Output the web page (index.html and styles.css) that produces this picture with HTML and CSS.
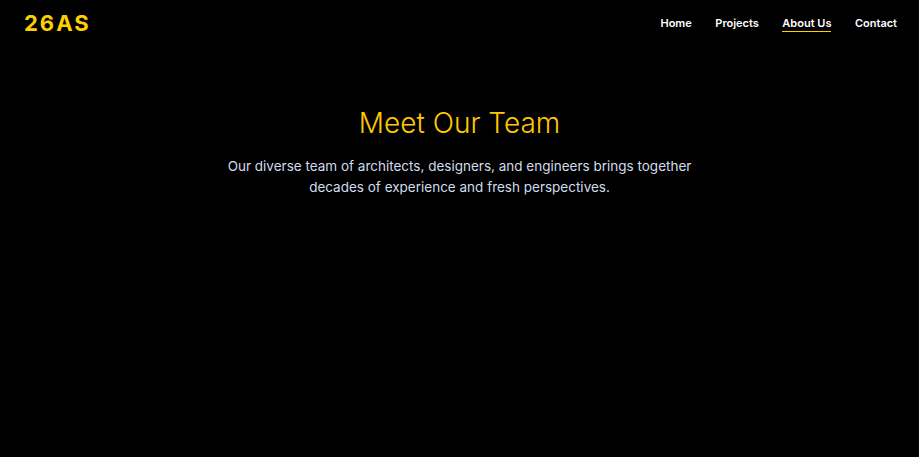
FILE: index.html
```html
<!DOCTYPE html>
<html lang="en">
<head>
<meta charset="utf-8">
<title>26AS - About Us</title>
<link rel="stylesheet" href="styles.css">
</head>
<body>
<header class="site-header">
  <div class="logo">26AS</div>
  <nav class="nav">
    <a href="#" class="nav-link">Home</a>
    <a href="#" class="nav-link">Projects</a>
    <a href="#" class="nav-link active">About Us</a>
    <a href="#" class="nav-link">Contact</a>
  </nav>
</header>
<main class="team">
  <h1 class="team-title">Meet Our Team</h1>
  <p class="team-text">Our diverse team of architects, designers, and engineers brings together decades of experience and fresh perspectives.</p>
</main>
</body>
</html>
```
FILE: styles.css
```css
html, body {
  margin: 0;
  padding: 0;
  background: #000;
  height: 100%;
}
body {
  font-family: Inter, "Liberation Sans", sans-serif;
  color: #fff;
}
.site-header {
  display: flex;
  justify-content: space-between;
  align-items: center;
  padding: 11px 22px 0 24px;
  height: 24px;
}
.logo {
  color: #ffd000;
  font-size: 22px;
  font-weight: 700;
  letter-spacing: 2px;
}
.nav {
  display: flex;
  gap: 23.5px;
  padding-top: 1px;
}
.nav-link {
  color: #fff;
  text-decoration: none;
  font-size: 11px;
  font-weight: 600;
  padding-bottom: 1px;
  border-bottom: 1px solid transparent;
}
.nav-link.active {
  border-bottom-color: #ffd000;
}
.team {
  display: flex;
  flex-direction: column;
  align-items: center;
  padding-top: 70px;
}
.team-title {
  margin: 0;
  color: #ffc800;
  font-size: 28px;
  font-weight: 300;
  line-height: 36px;
}
.team-text {
  margin: 15px 0 0;
  width: 520px;
  text-align: center;
  color: #d0dcec;
  font-size: 13.5px;
  line-height: 21px;
}
```
